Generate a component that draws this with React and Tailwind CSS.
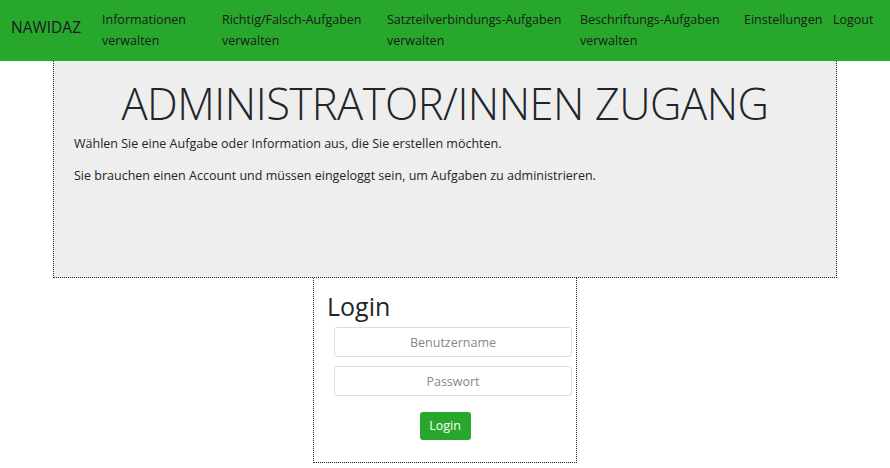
import React from 'react'

const navItems = [
  { lines: ['Informationen', 'verwalten'], w: 'w-[120px]' },
  { lines: ['Richtig/Falsch-Aufgaben', 'verwalten'], w: 'w-[165px]' },
  { lines: ['Satzteilverbindungs-Aufgaben', 'verwalten'], w: 'w-[193px]' },
  { lines: ['Beschriftungs-Aufgaben', 'verwalten'], w: 'w-[164px]' },
  { lines: ['Einstellungen'], w: 'w-[89px]' },
  { lines: ['Logout'], w: 'w-[50px]' },
]

export default function App() {
  return (
    <div className="min-h-[468px] bg-white text-[#212529] font-['Open_Sans',sans-serif] text-[12.5px]">
      {/* Navbar */}
      <nav className="h-[61px] bg-[#27a82c] flex items-start pl-[11px]">
        <a className="text-[15.5px] leading-none mt-[20px] w-[91px] text-[#1a1a1a]">NAWIDAZ</a>
        <ul className="flex">
          {navItems.map((item, i) => (
            <li key={i} className={`${item.w} pt-[9px] leading-[21px] text-[#1a1a1a] whitespace-nowrap`}>
              {item.lines.map((line, j) => (
                <div key={j}>{line}</div>
              ))}
            </li>
          ))}
        </ul>
      </nav>

      {/* Jumbotron */}
      <div className="mx-[53px] h-[217px] bg-[#eeeeee] border border-dotted border-[#222] border-t-0 px-[20px]">
        <h1 className="text-center text-[43.5px] font-light leading-none pt-[21px] tracking-[-0.5px]">
          ADMINISTRATOR/INNEN ZUGANG
        </h1>
        <p className="mt-[9px]">Wählen Sie eine Aufgabe oder Information aus, die Sie erstellen möchten.</p>
        <p className="mt-[14px]">Sie brauchen einen Account und müssen eingeloggt sein, um Aufgaben zu administrieren.</p>
      </div>

      {/* Login */}
      <div className="ml-[313px] w-[264px] h-[185px] border border-dotted border-[#222] border-t-0 px-[13px] bg-white">
        <h2 className="text-[25px] leading-none pt-[16px]">Login</h2>
        <div className="pl-[7px] mt-[8px] flex flex-col gap-[9px]">
          <input
            placeholder="Benutzername"
            className="h-[30px] w-[238px] border border-[#dddddd] rounded-[3px] text-center text-[12.5px] placeholder:text-[#888]"
          />
          <input
            placeholder="Passwort"
            className="h-[30px] w-[238px] border border-[#dddddd] rounded-[3px] text-center text-[12.5px] placeholder:text-[#888]"
          />
        </div>
        <div className="flex justify-center mt-[16px]">
          <button className="h-[28px] w-[51px] bg-[#27a82c] text-white rounded-[3px] text-[12.5px]">Login</button>
        </div>
      </div>
    </div>
  )
}
